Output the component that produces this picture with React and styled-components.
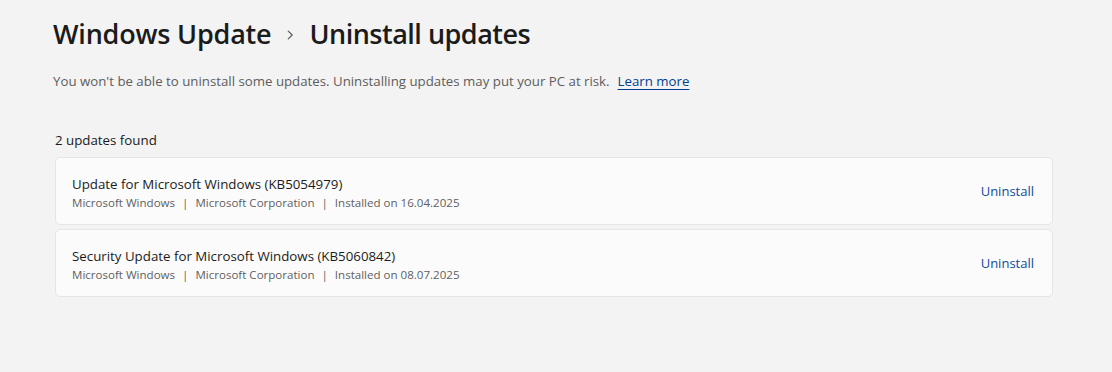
import React from "react";
import styled, { createGlobalStyle } from "styled-components";

const Global = createGlobalStyle`
  html, body { margin: 0; padding: 0; background: #f3f3f3; }
  body { font-family: "Segoe UI", "Open Sans", "Noto Sans", sans-serif; color: #1b1b1b; }
`;

const Page = styled.div`
  width: 1112px;
  height: 372px;
  box-sizing: border-box;
  padding: 16px 59px 0 53px;
  background: #f3f3f3;
`;

const Breadcrumb = styled.h1`
  margin: 0;
  display: flex;
  align-items: center;
  gap: 12px;
  font-size: 27px;
  font-weight: 600;
  line-height: 36px;
  color: #1b1b1b;
`;

const Crumb = styled.span`
  letter-spacing: ${(p) => (p.$tight ? "-0.5px" : "-0.2px")};
`;

const Chevron = styled.svg`
  width: 14px;
  height: 14px;
  margin-top: 2px;
`;

const Description = styled.p`
  margin: 20px 0 0;
  font-size: 13.25px;
  line-height: 18px;
  color: #5d5d5d;
`;

const Link = styled.a`
  margin-left: 8px;
  color: #003e92;
  text-decoration: underline;
  text-underline-offset: 3px;
`;

const Count = styled.div`
  margin: 40px 0 0 2px;
  font-size: 13.3px;
  line-height: 20px;
  color: #1b1b1b;
`;

const List = styled.div`
  margin: 7px 0 0 2px;
  display: flex;
  flex-direction: column;
  gap: 4px;
`;

const Card = styled.div`
  height: 68px;
  box-sizing: border-box;
  border: 1px solid #e5e5e5;
  border-radius: 5px;
  background: #fbfbfb;
  display: flex;
  align-items: center;
  justify-content: space-between;
  padding: 0 18px 0 16px;
`;

const Info = styled.div`
  display: flex;
  flex-direction: column;
  gap: 1px;
  padding-top: 2px;
`;

const Title = styled.div`
  font-size: 13.3px;
  line-height: 20px;
  color: #1b1b1b;
`;

const Meta = styled.div`
  font-size: 11.55px;
  line-height: 16px;
  color: #5f5f5f;
`;

const Sep = styled.span`
  margin: 0 7px;
`;

const Action = styled.button`
  border: none;
  background: none;
  padding: 0;
  font: inherit;
  font-size: 13px;
  color: #0f4a9c;
  cursor: pointer;
`;

const updates = [
  { title: "Update for Microsoft Windows (KB5054979)", date: "16.04.2025" },
  { title: "Security Update for Microsoft Windows (KB5060842)", date: "08.07.2025" },
];

export default function App() {
  return (
    <>
      <Global />
      <Page>
        <Breadcrumb>
          <Crumb>Windows Update</Crumb>
          <Chevron viewBox="0 0 16 16" fill="none">
            <path d="M6 3.5 L10.5 8 L6 12.5" stroke="#5d5d5d" strokeWidth="1.4" strokeLinecap="round" strokeLinejoin="round" />
          </Chevron>
          <Crumb $tight>Uninstall updates</Crumb>
        </Breadcrumb>
        <Description>
          You won't be able to uninstall some updates. Uninstalling updates may put your PC at risk.
          <Link href="#">Learn more</Link>
        </Description>
        <Count>2 updates found</Count>
        <List>
          {updates.map((u) => (
            <Card key={u.title}>
              <Info>
                <Title>{u.title}</Title>
                <Meta>
                  Microsoft Windows<Sep>|</Sep>Microsoft Corporation<Sep>|</Sep>Installed on {u.date}
                </Meta>
              </Info>
              <Action>Uninstall</Action>
            </Card>
          ))}
        </List>
      </Page>
    </>
  );
}
